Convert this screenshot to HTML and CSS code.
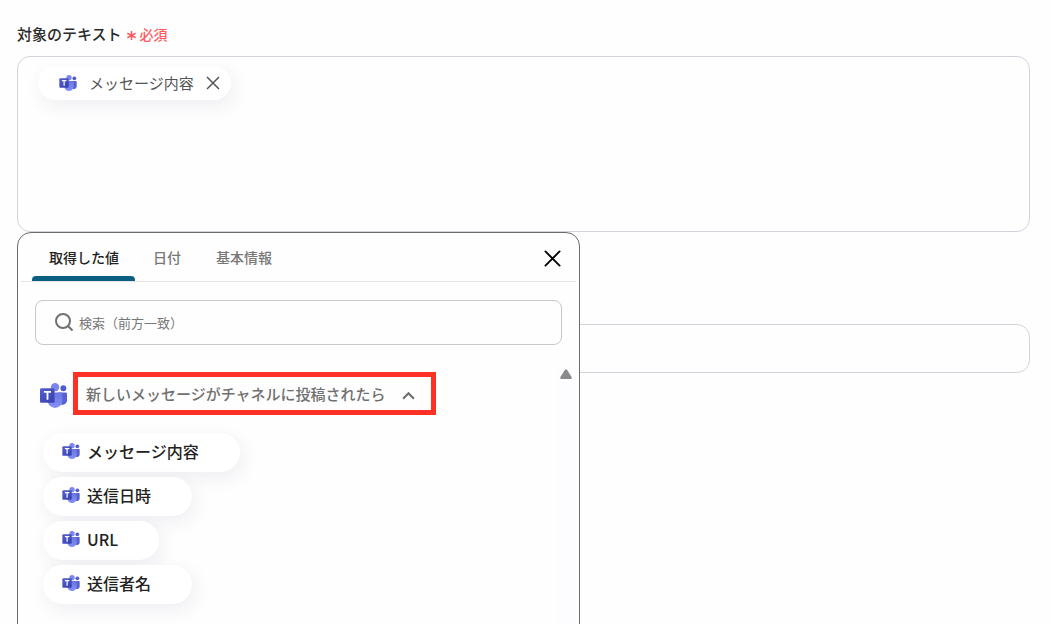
FILE: index.html
```html
<!DOCTYPE html>
<html lang="ja">
<head>
<meta charset="utf-8">
<title>対象のテキスト</title>
<link rel="stylesheet" href="styles.css">
</head>
<body>
<svg class="defs" aria-hidden="true">
  <defs>
    <linearGradient id="tile" x1="0" y1="0" x2="1" y2="1">
      <stop offset="0" stop-color="#5560cc"/>
      <stop offset="1" stop-color="#3540ae"/>
    </linearGradient>
    <linearGradient id="torso" x1="0" y1="0" x2="0" y2="1">
      <stop offset="0" stop-color="#6a75e0"/>
      <stop offset="1" stop-color="#8490fa"/>
    </linearGradient>
  </defs>
  <symbol id="teams" viewBox="0 0 26 24">
    <circle cx="22.5" cy="5" r="2.8" fill="#4f5bce"/>
    <path d="M17 9h8a1 1 0 0 1 1 1v6a4.500 4.500 0 0 1-9 1z" fill="#5662d3"/>
    <circle cx="14.500" cy="4" r="4" fill="#7b87ee"/>
    <path d="M8 9h12.500a1 1 0 0 1 1 1v7a7 7 0 0 1-14 0z" fill="url(#torso)"/>
    <rect x="0" y="5" width="14" height="14" rx="1.300" fill="url(#tile)"/>
    <path d="M3.800 8.500h6.800M7.200 8.500v7.500" stroke="#fff" stroke-width="1.800" fill="none"/>
  </symbol>
</svg>
<main class="page">
  <h1 class="label">対象のテキスト
    <span class="required"><svg class="star" viewBox="0 0 12 12" aria-hidden="true"><path d="M6 1v10M1.500 3.500l9 5M10.500 3.500l-9 5"/></svg>必須</span>
  </h1>
  <section class="field">
    <div class="editor">
      <span class="chip chip-selected">
        <svg class="icon-small" aria-hidden="true"><use href="#teams"/></svg>
        メッセージ内容
        <button class="remove" type="button" aria-label="削除"><svg viewBox="0 0 14 14"><path d="M1 1l12 12M13 1L1 13"/></svg></button>
      </span>
    </div>
    <div class="panel">
      <header class="tabs">
        <button class="tab tab-active" type="button"><span>取得した値</span></button>
        <button class="tab" type="button"><span>日付</span></button>
        <button class="tab" type="button"><span>基本情報</span></button>
        <button class="close" type="button" aria-label="閉じる"><svg viewBox="0 0 18 18"><path d="M1.500 1.500l15 15M16.500 1.500l-15 15"/></svg></button>
      </header>
      <label class="search">
        <svg class="lens" viewBox="0 0 20 20" aria-hidden="true"><circle cx="9" cy="8" r="7"/><path d="M14 13l4.500 4.500"/></svg>
        <input type="text" aria-label="検索" placeholder="検索（前方一致）">
      </label>
      <div class="results">
        <div class="list">
          <div class="group">
            <svg class="icon-large" aria-hidden="true"><use href="#teams"/></svg>
            <button class="toggle" type="button">新しいメッセージがチャネルに投稿されたら<svg class="chevron" viewBox="0 0 12 8" aria-hidden="true"><path d="M1 7l5-5 5 5"/></svg></button>
          </div>
          <div class="options">
            <button class="chip option" type="button"><svg class="icon-small" aria-hidden="true"><use href="#teams"/></svg>メッセージ内容</button>
            <button class="chip option" type="button"><svg class="icon-small" aria-hidden="true"><use href="#teams"/></svg>送信日時</button>
            <button class="chip option" type="button"><svg class="icon-small" aria-hidden="true"><use href="#teams"/></svg>URL</button>
            <button class="chip option" type="button"><svg class="icon-small" aria-hidden="true"><use href="#teams"/></svg>送信者名</button>
          </div>
        </div>
        <div class="scroll" aria-hidden="true"><svg viewBox="0 0 14 10"><path d="M6 .8q1-1 2 0L12.600 8q.6 2-1 2H2.400q-1.600 0-1-2z"/></svg></div>
      </div>
    </div>
  </section>
  <input class="next" type="text" aria-label="入力">
</main>
</body>
</html>
```
FILE: styles.css
```css
* { box-sizing: border-box; }
body {
  margin: 0;
  background: #fefefe;
  color: #2b2b2b;
  font-family: "Noto Sans CJK JP", sans-serif;
}
button, input { font-family: inherit; }
button {
  border: 0;
  padding: 0;
  background: none;
  color: inherit;
}
svg { display: block; flex: none; }
.defs { position: absolute; width: 0; height: 0; }
.page {
  height: 100vh;
  overflow: hidden;
  padding: 22px 21px 0 17px;
}
.label {
  display: flex;
  align-items: center;
  gap: 4px;
  margin: 0 0 10px;
  font-size: 15px;
  line-height: 24px;
  font-weight: 500;
}
.required {
  display: flex;
  align-items: center;
  gap: 3px;
  color: #ff5a60;
  font-size: 14px;
}
.star { width: 11px; height: 11px; fill: none; stroke: #ff5a60; stroke-width: 1.7; margin-top: 3px; }
.field { position: relative; }
.editor {
  height: 176px;
  padding: 9px 20px;
  border: 1px solid #d3d3db;
  border-radius: 13px;
}
.chip {
  display: inline-flex;
  align-items: center;
  border-radius: 20px;
  background: #fff;
  box-shadow: 3px 6px 18px rgba(60, 40, 90, 0.08);
}
.chip-selected {
  height: 34px;
  gap: 12px;
  padding: 0 11px 1px 21px;
  color: #555;
  font-size: 15px;
}
.icon-small { width: 18px; height: 16px; }
.icon-large { width: 27px; height: 25px; margin-top: 3px; }
.remove svg { width: 14px; height: 14px; fill: none; stroke: #555; stroke-width: 1.5; }
.panel {
  position: absolute;
  top: 100%;
  left: 0;
  width: 563px;
  max-width: 100%;
  min-height: 400px;
  border: 1px solid #6b6b6b;
  border-radius: 14px;
  background: #fefefe;
}
.tabs {
  display: flex;
  height: 49px;
  margin: 0 3px;
  padding: 0 15px 0 11px;
  border-bottom: 1px solid #e4e4e8;
}
.tab {
  padding: 0 17px 0 18px;
  color: #777;
  font-size: 14px;
  font-weight: 500;
}
.tab-active {
  display: flex;
  flex-direction: column;
  padding: 0;
  color: #222;
}
.tab-active span { margin: auto 16px; padding: 5px 0 0 1px; }
.tab-active::after {
  content: "";
  align-self: stretch;
  height: 5px;
  border-radius: 4px 4px 0 0;
  background: #0b5f80;
}
.close { margin-left: auto; padding-top: 3px; }
.close svg { width: 17px; height: 17px; fill: none; stroke: #000; stroke-width: 2; stroke-linecap: round; }
.search {
  display: flex;
  align-items: center;
  gap: 5px;
  height: 45px;
  margin: 18px 17px 0;
  padding: 0 18px;
  border: 1px solid #c8c8c8;
  border-radius: 8px;
}
.lens { width: 20px; height: 20px; fill: none; stroke: #707070; stroke-width: 2; }
.search input {
  flex: 1;
  min-width: 0;
  padding: 0;
  border: 0;
  outline: 0;
  background: none;
  font-size: 13px;
}
.search input::placeholder { color: #777; opacity: 1; }
.results {
  display: flex;
  margin-top: 24px;
  padding-right: 3px;
}
.list { flex: 1; padding: 3px 0 0 22px; }
.group { display: flex; align-items: center; gap: 6px; }
.toggle {
  display: flex;
  align-items: center;
  gap: 16px;
  height: 43px;
  padding: 0 16px 0 8px;
  border: 5px solid #ff3126;
  color: #707070;
  font-size: 15px;
  font-weight: 500;
}
.chevron { width: 13px; height: 9px; margin-top: 3px; fill: none; stroke: #707070; stroke-width: 2; }
.options {
  display: flex;
  flex-direction: column;
  align-items: flex-start;
  gap: 5px;
  padding: 18px 0 40px 3px;
}
.option {
  height: 39px;
  gap: 7px;
  padding: 0 41px 4px 19px;
  color: #222;
  font-size: 16px;
  font-weight: 500;
}
.scroll {
  width: 20px;
  background: #fdfcfe;
}
.scroll svg { width: 14px; height: 10px; margin-left: 3px; fill: #8b898d; }
.next {
  display: block;
  width: 100%;
  height: 49px;
  margin-top: 92px;
  padding: 0 16px;
  border: 1px solid #d3d3db;
  border-radius: 13px;
  background: #fefefe;
}
```
